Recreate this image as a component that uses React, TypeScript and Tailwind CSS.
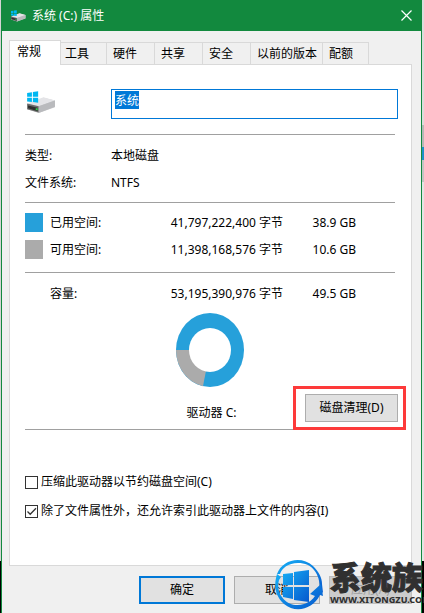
import { useEffect, useRef } from 'react';
import type { ReactNode } from 'react';

const tabs = [
  { name: '工具', style: 'w-[46px] pl-1' },
  { name: '硬件', style: 'w-12 pl-1.5' },
  { name: '共享', style: 'w-12 pl-1.5' },
  { name: '安全', style: 'w-12 pl-1.5' },
  { name: '以前的版本', style: 'w-[72px] pl-1.5' },
  { name: '配额', style: 'w-[46px] pl-1.5' },
];

function DriveIcon({ className }: { className: string }) {
  return (
    <svg className={className} viewBox="0 0 30 24" aria-hidden="true">
      <path d="M0 14 L17 7 L29 10 L29 17 L12 23 L0 19Z" fill="#c9cacc" />
      <path d="M0 13 L17 6.500 L29 10 L12 16Z" fill="#e4e4e7" />
      <path d="M12 16 L29 10 L29 16.500 L12 23Z" fill="#b9babd" />
      <path d="M0 13 L12 16 L12 22.500 L0 19Z" fill="#6d6d6d" />
      <path d="M1 15 L11 17.500 L11 21 L1 18Z" fill="#303030" />
      <rect x="9" y="18" width="2" height="2" fill="#31d04a" />
      <path d="M0 2 L5 1.300 V6 H0Z M6 1.100 L11.500 0.300 V6 H6Z M0 7 H5 V11.500 L0 11Z M6 7 H11.500 V12.200 L6 11.600Z" fill="#00b7f1" />
    </svg>
  );
}

function Rule() {
  return <hr className="mr-[3px] border-0 border-t border-[#a0a0a0]" />;
}

type Space = { label: string; bytes: string; size: string; swatch?: string };

function SpaceTable({ rows }: { rows: Space[] }) {
  return (
    <table className="w-full border-collapse">
      <tbody>
        {rows.map((row) => (
          <tr key={row.label} className="h-[27px]">
            <td className="w-[25px] p-0">
              {row.swatch && <div className={`h-[19px] w-[18px] ${row.swatch}`} />}
            </td>
            <th scope="row" className="p-0 text-left font-normal">{row.label}</th>
            <td className="w-[150px] p-0 text-right">{row.bytes}</td>
            <td className="w-[115px] p-0 pr-[42px] text-right">{row.size}</td>
          </tr>
        ))}
      </tbody>
    </table>
  );
}

function UsageChart() {
  return (
    <svg className="h-[74px] w-[68px]" viewBox="0 0 68 74" role="img" aria-label="驱动器 C:">
      <ellipse cx="34" cy="37" rx="34" ry="37" fill="#26a0da" />
      <path d="M34 37 H0 A34 37 0 0 0 27 73.200Z" fill="#ababab" />
      <ellipse cx="34" cy="37" rx="21" ry="22" fill="#fff" />
    </svg>
  );
}

function Option({ id, checked, children }: { id: string; checked?: boolean; children: ReactNode }) {
  return (
    <div className="flex items-center gap-[3px]">
      <span className="relative flex">
        <input
          id={id}
          type="checkbox"
          defaultChecked={checked}
          className="peer h-[13px] w-[13px] appearance-none border border-[#333] bg-white"
        />
        <svg className="pointer-events-none absolute inset-0 hidden h-[13px] w-[13px] peer-checked:block" viewBox="0 0 13 13" aria-hidden="true">
          <path d="M2.500 6.500 L5.200 9.200 L11 3.200" fill="none" stroke="#333" strokeWidth="1.300" />
        </svg>
      </span>
      <label htmlFor={id} className="whitespace-nowrap">{children}</label>
    </div>
  );
}

function Watermark() {
  return (
    <div className="pointer-events-none absolute right-0 bottom-0 flex h-[56px] w-[150px] gap-1.5 overflow-hidden">
      <svg className="mt-0.5 h-[52px] w-[50px] shrink-0" viewBox="0 0 50 52" aria-hidden="true">
        <defs>
          <linearGradient id="sky" x1="0" y1="0" x2="1" y2="1">
            <stop offset="0" stopColor="#16aef5" />
            <stop offset="1" stopColor="#0758cd" />
          </linearGradient>
        </defs>
        <path d="M3 15 C8 1 27 -4 39 7 C45 13 48 19 48 25 L49 34 L46 31 C46 14 38 4 24 4 C14 4 8 9 6 15Z" fill="url(#sky)" />
        <path d="M3 15 L7 18 L5 21 C1 36 14 50 30 45 C36 43 39 40 41 37 L36 35 L47 25 L49 37 L46 36 C39 50 22 55 10 45 C0 36 0 25 3 15Z" fill="url(#sky)" />
        <path d="M9 15 L19 14 V26 H9Z M20 13 L35 11 V26 H20Z M9 28 H19 V40 L9 38Z M20 28 H35 V43 L20 41Z" fill="url(#sky)" />
      </svg>
      <div className="whitespace-nowrap text-[#303030]">
        <div className="pt-1 text-[31px] leading-[33px] font-black [-webkit-text-stroke:1px_#303030]">系统族</div>
        <div className="text-[9px] leading-[12px] font-extrabold">WWW.XITONGZU.COM</div>
      </div>
    </div>
  );
}

export default function App() {
  const nameBox = useRef<HTMLInputElement>(null);

  useEffect(() => {
    nameBox.current?.focus();
    nameBox.current?.select();
  }, []);

  return (
    <div className="relative flex min-h-screen w-full overflow-hidden bg-[linear-gradient(#d4d4d4_561px,#000_561px)] pl-px font-['Noto_Sans','Noto_Sans_CJK_SC',sans-serif] text-[12px] leading-[18px] text-black">
      <main className="flex min-w-0 flex-1 flex-col border-x border-[#12893e] bg-[#f0f0f0]">
        <header className="flex h-[31px] items-center bg-[#12893e] pr-[7px] pl-[9px] text-white">
          <DriveIcon className="h-3 w-[15px]" />
          <h1 className="ml-1.5 flex-1">系统 (C:) 属性</h1>
          <button type="button" aria-label="关闭" className="flex h-4 w-4 items-center justify-center">
            <svg className="h-[11px] w-[11px]" viewBox="0 0 11 11" aria-hidden="true">
              <path d="M0.500 0.500 L10.500 10.500 M10.500 0.500 L0.500 10.500" stroke="#fff" strokeWidth="1.200" />
            </svg>
          </button>
        </header>

        <div className="flex flex-1 flex-col pt-[9px] pr-[9px] pl-[7px]">
          <div role="tablist" className="flex items-end">
            <button type="button" role="tab" aria-selected="true" className="relative -mb-px flex h-[25px] w-[52px] items-start border border-b-0 border-[#d9d9d9] bg-white pt-0.5 pl-[7px]">
              常规
            </button>
            {tabs.map((tab) => (
              <button
                key={tab.name}
                type="button"
                role="tab"
                aria-selected="false"
                className={`flex h-[22px] items-center border-t border-r border-[#d9d9d9] whitespace-nowrap ${tab.style}`}
              >
                {tab.name}
              </button>
            ))}
          </div>

          <section className="border border-[#d9d9d9] bg-white pt-6 pr-[13px] pb-[45px] pl-[15px]">
            <div className="flex pb-[15px]">
              <div className="w-[86px] shrink-0 pt-0.5 pl-0.5">
                <DriveIcon className="h-[23px] w-[29px]" />
              </div>
              <input
                ref={nameBox}
                aria-label="卷标"
                defaultValue="系统"
                className="h-[30px] min-w-0 flex-1 border border-[#0078d7] bg-white pt-0 pb-2 pl-[3px] outline-none selection:bg-[#0078d7] selection:text-white"
              />
            </div>
            <Rule />
            <dl className="grid grid-cols-[86px_1fr] gap-y-[9px] pt-3 pb-2.5">
              <dt>类型:</dt>
              <dd>本地磁盘</dd>
              <dt>文件系统:</dt>
              <dd>NTFS</dd>
            </dl>
            <Rule />
            <div className="pt-1.5 pb-[9px]">
              <SpaceTable
                rows={[
                  { label: '已用空间:', bytes: '41,797,222,400 字节', size: '38.9 GB', swatch: 'bg-[#26a0da]' },
                  { label: '可用空间:', bytes: '11,398,168,576 字节', size: '10.6 GB', swatch: 'bg-[#ababab]' },
                ]}
              />
            </div>
            <Rule />
            <div className="pt-[7px]">
              <SpaceTable rows={[{ label: '容量:', bytes: '53,195,390,976 字节', size: '49.5 GB' }]} />
            </div>
            <div className="mr-[3px] flex justify-center pt-1.5">
              <UsageChart />
            </div>
            <div className="grid grid-cols-[1fr_auto_1fr] items-end pt-[7px] pb-[7px]">
              <p className="col-start-2">驱动器 C:</p>
              <div className="relative justify-self-end">
                <button type="button" className="block h-7 w-[93px] border border-[#adadad] bg-[#e1e1e1]">磁盘清理(D)</button>
                <span className="pointer-events-none absolute -top-2 -right-2 -bottom-2 -left-3 border-3 border-[#fd3a3a]" />
              </div>
            </div>
            <Rule />
            <div className="flex flex-col gap-[11px] pt-[43px]">
              <Option id="compress">压缩此驱动器以节约磁盘空间(C)</Option>
              <Option id="index" checked>除了文件属性外，还允许索引此驱动器上文件的内容(I)</Option>
            </div>
          </section>

          <footer className="flex justify-end gap-[9px] pt-2.5 pb-[9px]">
            <button type="button" className="h-7 w-[86px] border-2 border-[#0078d7] bg-[#e1e1e1]">确定</button>
            <button type="button" className="h-7 w-[86px] border border-[#adadad] bg-[#e1e1e1]">取消</button>
            <button type="button" disabled className="h-7 w-[83px] border border-[#bfbfbf] bg-[#cccccc] text-[#a0a0a0]">应用(A)</button>
          </footer>
        </div>
      </main>
      <div className="w-0.5 shrink-0 bg-[linear-gradient(#dcdcdc_125px,#b8b8b8_125px_147px,#1e90c8_147px_160px,#c4c4c4_160px_182px,#e4e4e4_182px_561px,#000_561px)]" />
      <Watermark />
    </div>
  );
}
